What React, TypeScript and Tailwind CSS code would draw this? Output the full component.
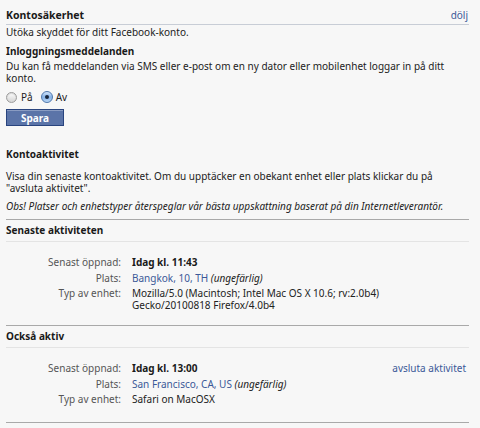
import React from "react";

const font = { fontFamily: '"Noto Sans", "Open Sans", sans-serif' };

function Row({ label, children, right }: { label: string; children: React.ReactNode; right?: React.ReactNode }) {
  return (
    <div className="flex items-start">
      <div className="w-[115px] shrink-0 text-right text-[#555]">{label}</div>
      <div className="ml-[11px] flex-1 min-w-0 text-[#222]">
        <div className="max-w-[290px]">{children}</div>
      </div>
      {right}
    </div>
  );
}

export default function App() {
  return (
    <div className="w-[480px] h-[428px] bg-[#f7f7f7] text-[10px] leading-[12px] text-[#222] overflow-hidden" style={font}>
      <div className="ml-[6px] w-[463px] pt-[9px]">
        <div className="flex justify-between items-end border-b border-[#c8cdd6] pb-[2px] leading-[13px]">
          <div className="font-bold text-[10.5px] text-[#1a1a1a]">Kontosäkerhet</div>
          <a className="text-[#3b5998] mr-[1px]">dölj</a>
        </div>
        <div className="mt-[1px]">Utöka skyddet för ditt Facebook-konto.</div>
        <div className="mt-[7px] font-bold text-[#1a1a1a]">Inloggningsmeddelanden</div>
        <div className="mt-[3px]">Du kan få meddelanden via SMS eller e-post om en ny dator eller mobilenhet loggar in på ditt konto.</div>
        <div className="flex items-center mt-[7px] h-[12px]">
          <span className="w-[11px] h-[11px] rounded-full border border-[#9c9c9c] bg-gradient-to-b from-[#fdfdfd] to-[#d4d4d4] shadow-[inset_0_1px_1px_rgba(0,0,0,0.15)]" />
          <span className="ml-[4px]">På</span>
          <span className="ml-[8px] w-[12px] h-[12px] rounded-full border border-[#4f77ad] bg-gradient-to-b from-[#d3e5fa] via-[#86b2e6] to-[#b9d6f5] flex items-center justify-center">
            <span className="w-[4px] h-[4px] rounded-full bg-[#17243a]" />
          </span>
          <span className="ml-[3px]">Av</span>
        </div>
        <button
          className="mt-[6px] w-[58px] h-[17px] bg-[#5b74a8] border border-[#29447e] shadow-[inset_0_1px_0_#8a9cc2] text-white font-bold text-[10px] leading-[14px] flex items-center justify-center"
          style={font}
        >
          Spara
        </button>
        <div className="mt-[22px] font-bold text-[#1a1a1a]">Kontoaktivitet</div>
        <div className="mt-[10px]">Visa din senaste kontoaktivitet. Om du upptäcker en obekant enhet eller plats klickar du på "avsluta aktivitet".</div>
        <div className="mt-[6px] italic">Obs! Platser och enhetstyper återspeglar vår bästa uppskattning baserat på din Internetleverantör.</div>
        <div className="mt-[7px] border-t border-[#a9a9a9]" />
        <div className="pt-[4px] pb-[5px] border-b border-[#e4e4e4] font-bold text-[#1a1a1a]">Senaste aktiviteten</div>
        <div className="pt-[14px] pb-[14px] flex flex-col gap-[3.5px] border-b border-[#a9a9a9]">
          <Row label="Senast öppnad:"><span className="font-bold text-[#1a1a1a]">Idag kl. 11:43</span></Row>
          <Row label="Plats:"><span className="text-[#3b5998]">Bangkok, 10, TH</span> <i>(ungefärlig)</i></Row>
          <Row label="Typ av enhet:">Mozilla/5.0 (Macintosh; Intel Mac OS X 10.6; rv:2.0b4) Gecko/20100818 Firefox/4.0b4</Row>
        </div>
        <div className="pt-[4px] pb-[5px] border-b border-[#e4e4e4] font-bold text-[#1a1a1a]">Också aktiv</div>
        <div className="pt-[14px] pb-[17px] flex flex-col gap-[3.5px] border-b border-[#a9a9a9]">
          <Row label="Senast öppnad:" right={<a className="text-[#3b5998] mr-[3px]">avsluta aktivitet</a>}><span className="font-bold text-[#1a1a1a]">Idag kl. 13:00</span></Row>
          <Row label="Plats:"><span className="text-[#3b5998]">San Francisco, CA, US</span> <i>(ungefärlig)</i></Row>
          <Row label="Typ av enhet:">Safari on MacOSX</Row>
        </div>
      </div>
    </div>
  );
}
